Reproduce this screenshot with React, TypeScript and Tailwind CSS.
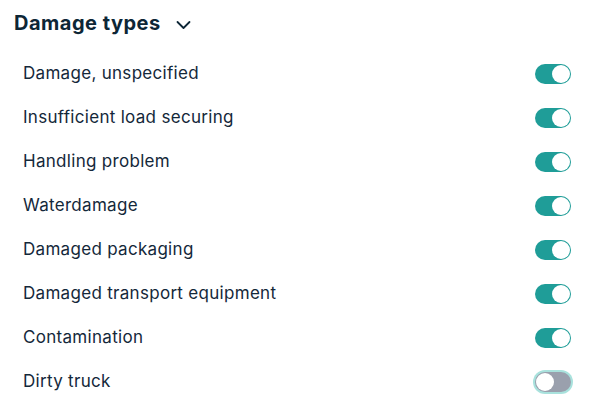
import React, { useState } from "react";

const items = [
  { label: "Damage, unspecified", on: true },
  { label: "Insufficient load securing", on: true },
  { label: "Handling problem", on: true },
  { label: "Waterdamage", on: true },
  { label: "Damaged packaging", on: true },
  { label: "Damaged transport equipment", on: true },
  { label: "Contamination", on: true },
  { label: "Dirty truck", on: false },
];

function Toggle({ on, focus }: { on: boolean; focus?: boolean }) {
  return (
    <div
      className={`w-[36px] h-[20px] rounded-full flex items-center px-[1px] ${
        on ? "bg-[#1f9d98] justify-end" : "bg-[#9aa0ad] justify-start"
      } ${focus ? "ring-2 ring-[#a9e2dd]" : ""}`}
    >
      <div className="w-[18px] h-[18px] rounded-full bg-white" />
    </div>
  );
}

export default function App() {
  const [state] = useState(items);
  return (
    <div
      className="w-[596px] h-[405px] bg-white text-[#0e2433] overflow-hidden"
      style={{ fontFamily: "Inter, 'Noto Sans', sans-serif" }}
    >
      <div className="flex items-center pl-[14px] pt-[10px] h-[36px] gap-[15px]">
        <span className="text-[20px] font-bold tracking-[0.5px] text-[#0d2636]">Damage types</span>
        <svg width="15" height="10" viewBox="0 0 15 10" className="mt-[3px]">
          <path d="M1.5 2 L7.5 8 L13.5 2" fill="none" stroke="#0d2636" strokeWidth="1.8" strokeLinecap="round" strokeLinejoin="round" />
        </svg>
      </div>
      <div className="flex flex-col pt-[16px] pl-[23px] pr-[25px]">
        {state.map((it, i) => (
          <div key={i} className="flex items-center justify-between h-[44px]">
            <span className="text-[17px] tracking-[0.3px] text-[#14283a]">{it.label}</span>
            <Toggle on={it.on} focus={!it.on} />
          </div>
        ))}
      </div>
    </div>
  );
}
